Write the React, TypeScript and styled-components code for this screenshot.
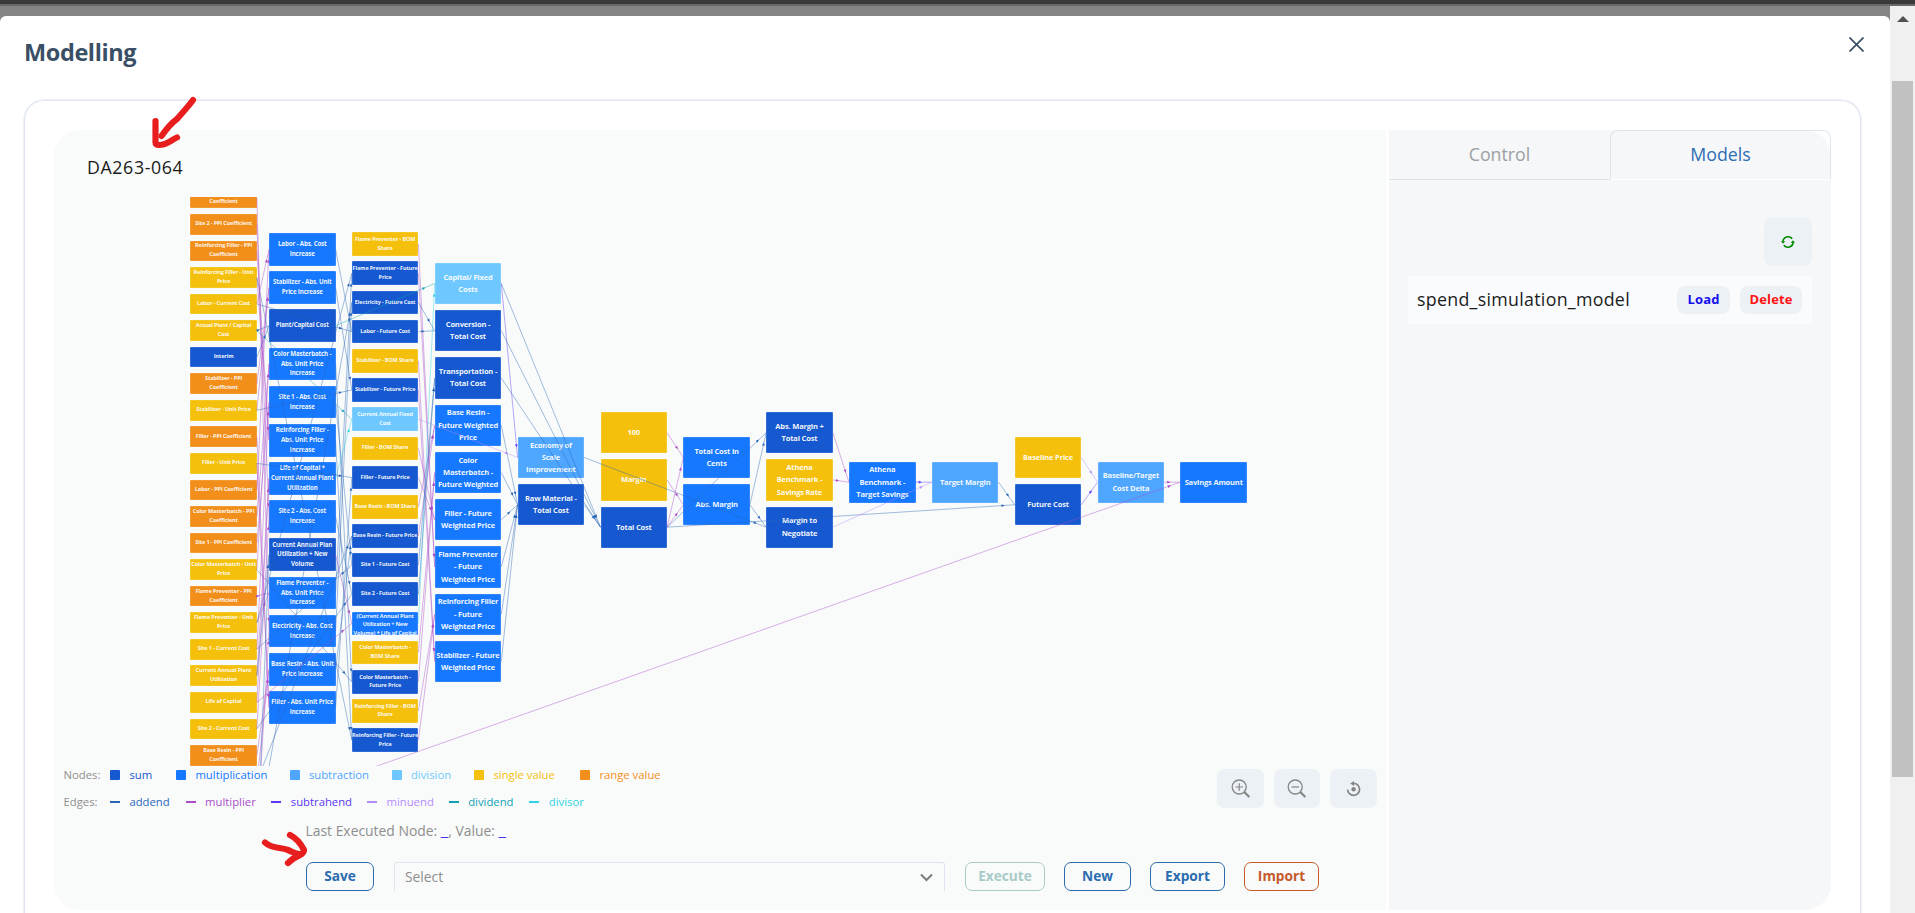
import React from "react";
import styled, { createGlobalStyle } from "styled-components";

const GlobalStyle = createGlobalStyle`
  * { box-sizing: border-box; }
  html, body { margin: 0; padding: 0; overflow: hidden; background: #fff; }
  body { font-family: "Open Sans", "Noto Sans", sans-serif; }
  button { font-family: inherit; padding: 0; margin: 0; }
`;

/* ---------- Page shell ---------- */

const Page = styled.div`
  position: relative;
  width: 1915px;
  height: 913px;
  display: flex;
  flex-direction: column;
  overflow: hidden;
  background: #858585;
`;

const TopStrip = styled.div`
  flex: none;
  height: 6px;
  background: #3a3a3a;
  border-bottom: 2px solid #696969;
`;

const Body = styled.div`
  flex: 1;
  display: flex;
  min-height: 0;
`;

const Modal = styled.section`
  flex: 1;
  margin-top: 10px;
  background: #fff;
  border-radius: 6px 6px 0 0;
  display: flex;
  flex-direction: column;
  min-height: 0;
`;

const ModalHeader = styled.header`
  height: 84px;
  flex: none;
  display: flex;
  justify-content: space-between;
  padding: 19px 26px 0 24px;
`;

const Title = styled.h1`
  margin: 0;
  font-size: 23.5px;
  line-height: 34px;
  font-weight: 700;
  letter-spacing: -0.4px;
  color: #3a4f66;
`;

const CloseButton = styled.button`
  border: 0;
  background: none;
  width: 15px;
  height: 15px;
  margin-top: 2px;
  display: flex;
`;

const Card = styled.div`
  flex: 1;
  margin: 0 29px 0 24px;
  padding: 29px 29px 2px 29px;
  border: 1px solid #dde4ed;
  border-bottom: 0;
  border-radius: 20px 20px 0 0;
  box-shadow: 0 0 0 1px #f0f2f8;
  display: flex;
  min-height: 0;
`;

const Workspace = styled.div`
  width: 1777px;
  height: 780px;
  display: flex;
  gap: 3px;
`;

/* ---------- Scrollbar ---------- */

const Scrollbar = styled.div`
  width: 25px;
  background: #f0f0f0;
  padding: 10px 2px 0;
  display: flex;
  flex-direction: column;
  align-items: center;
`;

const ScrollUp = styled.div`
  border: 6px solid transparent;
  border-top: 0;
  border-bottom: 6px solid #505050;
`;

const Thumb = styled.div`
  width: 21px;
  height: 696px;
  margin-top: 59px;
  background: #c1c1c1;
`;

/* ---------- Left pane ---------- */

const Canvas = styled.div`
  width: 1332px;
  background: #f9fbfa;
  border-radius: 26px 0 0 26px;
  display: flex;
  flex-direction: column;
`;

const ModelName = styled.div`
  height: 67px;
  padding: 24px 0 0 33px;
  font-size: 17.8px;
  line-height: 26px;
  letter-spacing: 0.6px;
  color: #1b1b1b;
`;

const Diagram = styled.div`
  position: relative;
  height: 569px;
  overflow: hidden;
`;

const NodeBox = styled.div<{ $x: number; $y: number; $h: number; $bg: string; $fs: number; $lh: number; $top?: boolean }>`
  position: absolute;
  left: ${(p) => p.$x}px;
  top: ${(p) => p.$y}px;
  width: 66.6px;
  height: ${(p) => p.$h}px;
  background: ${(p) => p.$bg};
  border-radius: 1px;
  box-shadow: inset 0 0 0 0.6px rgba(255, 255, 255, 0.22);
  display: flex;
  flex-direction: column;
  align-items: center;
  justify-content: ${(p) => (p.$top ? "flex-start" : "center")};
  overflow: hidden;
  padding-bottom: 1px;
  font-size: ${(p) => p.$fs}px;
  line-height: ${(p) => p.$lh}px;
  letter-spacing: -0.025em;
  font-weight: 700;
  color: rgba(255, 255, 255, 0.95);
  white-space: nowrap;
`;

const NodeLine = styled.span`
  flex: none;
`;

const EdgeLayer = styled.svg`
  position: absolute;
  inset: 0;
`;

const Footer = styled.div`
  display: flex;
  justify-content: space-between;
  padding: 0 9px 0 9.5px;
  height: 53px;
`;

const Legends = styled.div`
  display: flex;
  flex-direction: column;
`;

const Legend = styled.div<{ $gap: number }>`
  display: flex;
  align-items: center;
  height: 18px;
  margin-bottom: 9px;
  gap: ${(p) => p.$gap}px;
  font-size: 11.3px;
  line-height: 18px;
`;

const LegendLabel = styled.span<{ $gap: number }>`
  width: 46.5px;
  margin-right: -${(p) => p.$gap}px;
  color: #8e8e8e;
`;

const LegendItem = styled.span<{ $color: string; $w: number }>`
  width: ${(p) => p.$w}px;
  display: flex;
  align-items: center;
  gap: 9.4px;
  color: ${(p) => p.$color};
  white-space: nowrap;
`;

const Swatch = styled.i<{ $color: string; $line?: boolean }>`
  flex: none;
  width: 10px;
  height: ${(p) => (p.$line ? 2 : 10)}px;
  border-radius: ${(p) => (p.$line ? 0 : 1)}px;
  background: ${(p) => p.$color};
`;

const ZoomTools = styled.div`
  display: flex;
  gap: 10px;
  padding-top: 3px;
`;

const IconButton = styled.button<{ $w: number; $h: number }>`
  width: ${(p) => p.$w}px;
  height: ${(p) => p.$h}px;
  border: 0;
  border-radius: 8px;
  background: #ecf1f6;
  display: flex;
  align-items: center;
  justify-content: center;
`;

const Status = styled.div`
  padding-left: 251.5px;
  height: 43px;
  font-size: 13.9px;
  line-height: 24px;
  color: #8e8e8e;
  white-space: pre;
`;

const StatusValue = styled.span`
  font-size: 17px;
  line-height: 0;
  color: #3b36f0;
`;

const Actions = styled.div`
  display: flex;
  align-items: flex-start;
  padding-left: 252px;
`;

const ActionButton = styled.button<{ $w: number; $color: string; $ml?: number }>`
  width: ${(p) => p.$w}px;
  height: 29px;
  margin-left: ${(p) => p.$ml ?? 0}px;
  border: 1px solid ${(p) => p.$color};
  border-radius: 7px;
  background: transparent;
  color: ${(p) => p.$color};
  font-size: 13.7px;
  line-height: 24px;
  padding-bottom: 2px;
  font-weight: 700;
`;

const SelectBox = styled.div`
  width: 551px;
  height: 29px;
  margin-left: 20px;
  padding: 0 11px 0 10px;
  border: 1px solid #e0e4ee;
  border-bottom: 0;
  border-radius: 3px 3px 0 0;
  display: flex;
  align-items: center;
  justify-content: space-between;
  font-size: 13.8px;
  line-height: 24px;
  color: #8e8e8e;
`;

/* ---------- Right pane ---------- */

const SidePane = styled.aside`
  width: 442px;
  position: relative;
  display: flex;
  flex-direction: column;
  background: #f5f7f9;
  border-radius: 0 26px 26px 0;
`;

const Tabs = styled.div`
  display: flex;
  height: 50px;
`;

const Tab = styled.div<{ $active?: boolean }>`
  flex: 1;
  display: flex;
  align-items: center;
  justify-content: center;
  padding-bottom: 3px;
  font-size: 17.8px;
  line-height: 26px;
  color: ${(p) => (p.$active ? "#2f6db3" : "#9c9fa2")};
  border: 1px solid ${(p) => (p.$active ? "#dde6ef" : "transparent")};
  border-bottom-color: ${(p) => (p.$active ? "#fff" : "#dde4ed")};
  border-radius: ${(p) => (p.$active ? "8px 8px 0 0" : "0")};
`;

const SideBody = styled.div`
  padding: 38px 19px 0;
  display: flex;
  flex-direction: column;
  align-items: flex-end;
  gap: 10px;
`;

const ModelRow = styled.div`
  width: 404px;
  height: 48px;
  background: #fafbfd;
  display: flex;
  align-items: center;
  padding: 0 10px 0 9px;
`;

const ModelTitle = styled.span`
  flex: 1;
  font-size: 17.8px;
  line-height: 26px;
  letter-spacing: 0.3px;
  padding-bottom: 3px;
  color: #1b1b1b;
`;

const RowButton = styled.button<{ $w: number; $color: string }>`
  width: ${(p) => p.$w}px;
  height: 28px;
  margin-left: 10px;
  border: 0;
  border-radius: 8px;
  background: #ecf1f6;
  color: ${(p) => p.$color};
  font-size: 13px;
  line-height: 24px;
  letter-spacing: 0.15px;
  font-weight: 700;
  padding-bottom: 2px;
`;

const Scribble = styled.svg`
  position: absolute;
  left: 0;
  top: 0;
  pointer-events: none;
`;

/* ---------- Diagram data ---------- */

const KIND = {
  sum: "#1558d0",
  mul: "#1677ff",
  sub: "#4ea6ff",
  div: "#6ec8ff",
  one: "#f4c00c",
  range: "#f28e1a",
};
type Kind = keyof typeof KIND;

const EDGE = {
  addend: "#2a66b8",
  multiplier: "#a94cc8",
  subtrahend: "#5b36f5",
  minuend: "#b48bfa",
  dividend: "#12a0b4",
  divisor: "#2fd3e6",
};
type EdgeKind = keyof typeof EDGE;

type Column = { x: number; y: number; pitch: number; h: number; fs: number; lh: number; nodes: [string, Kind, string][] };

const W = 66.6;
const OX = 54;
const OY = 197;

const big = (x: number, y: number, nodes: [string, Kind, string][]): Column => ({
  x, y, pitch: 47.25, h: 41.4, fs: 7.55, lh: 12.3, nodes,
});

const columns: Column[] = [
  {
    x: 190.3, y: 187.5, pitch: 26.55, h: 20.7, fs: 5.55, lh: 9,
    nodes: [
      ["elP", "range", "Electricity - PPI|Coefficient"],
      ["s2P", "range", "Site 2 - PPI Coefficient"],
      ["rfP", "range", "Reinforcing Filler - PPI|Coefficient"],
      ["rfU", "one", "Reinforcing Filler - Unit|Price"],
      ["laU", "one", "Labor - Current Cost"],
      ["act", "one", "Actual Plant / Capital|Cost"],
      ["int", "sum", "Interim"],
      ["stP", "range", "Stabilizer - PPI|Coefficient"],
      ["stU", "one", "Stabilizer - Unit Price"],
      ["fiP", "range", "Filler - PPI Coefficient"],
      ["fiU", "one", "Filler - Unit Price"],
      ["laP", "range", "Labor - PPI Coefficient"],
      ["cmP", "range", "Color Masterbatch - PPI|Coefficient"],
      ["s1P", "range", "Site 1 - PPI Coefficient"],
      ["cmU", "one", "Color Masterbatch - Unit|Price"],
      ["fpP", "range", "Flame Preventer - PPI|Coefficient"],
      ["fpU", "one", "Flame Preventer - Unit|Price"],
      ["s1U", "one", "Site 1 - Current Cost"],
      ["cap", "one", "Current Annual Plant|Utilization"],
      ["life", "one", "Life of Capital"],
      ["s2U", "one", "Site 2 - Current Cost"],
      ["brP", "range", "Base Resin - PPI|Coefficient"],
      ["brU", "one", ""],
      ["vol", "one", ""],
      ["elU", "one", ""],
      ["newV", "one", ""],
    ],
  },
  {
    x: 269, y: 233, pitch: 38.17, h: 32.8, fs: 6.2, lh: 9.7,
    nodes: [
      ["laA", "mul", "Labor - Abs. Cost|Increase"],
      ["stA", "mul", "Stabilizer - Abs. Unit|Price Increase"],
      ["plant", "sum", "Plant/Capital Cost"],
      ["cmA", "mul", "Color Masterbatch -|Abs. Unit Price|Increase"],
      ["s1A", "mul", "Site 1 - Abs. Cost|Increase"],
      ["rfA", "mul", "Reinforcing Filler -|Abs. Unit Price|Increase"],
      ["lifeCap", "mul", "Life of Capital *|Current Annual Plant|Utilization"],
      ["s2A", "mul", "Site 2 - Abs. Cost|Increase"],
      ["planVol", "sum", "Current Annual Plan|Utilization + New|Volume"],
      ["fpA", "mul", "Flame Preventer -|Abs. Unit Price|Increase"],
      ["elA", "mul", "Electricity - Abs. Cost|Increase"],
      ["brA", "mul", "Base Resin - Abs. Unit|Price Increase"],
      ["fiA", "mul", "Filler - Abs. Unit Price|Increase"],
    ],
  },
  {
    x: 351.8, y: 232.3, pitch: 29.18, h: 23.6, fs: 5.5, lh: 8.8,
    nodes: [
      ["fpB", "one", "Flame Preventer - BOM|Share"],
      ["fpF", "sum", "Flame Preventer - Future|Price"],
      ["elF", "sum", "Electricity - Future Cost"],
      ["laF", "sum", "Labor - Future Cost"],
      ["stB", "one", "Stabilizer - BOM Share"],
      ["stF", "sum", "Stabilizer - Future Price"],
      ["fixed", "div", "Current Annual Fixed|Cost"],
      ["fiB", "one", "Filler - BOM Share"],
      ["fiF", "sum", "Filler - Future Price"],
      ["brB", "one", "Base Resin - BOM Share"],
      ["brF", "sum", "Base Resin - Future Price"],
      ["s1F", "sum", "Site 1 - Future Cost"],
      ["s2F", "sum", "Site 2 - Future Cost"],
      ["volLife", "mul", "(Current Annual Plant|Utilization + New|Volume) * Life of Capital"],
      ["cmB", "one", "Color Masterbatch -|BOM Share"],
      ["cmF", "sum", "Color Masterbatch -|Future Price"],
      ["rfB", "one", "Reinforcing Filler - BOM|Share"],
      ["rfF", "sum", "Reinforcing Filler - Future|Price"],
    ],
  },
  big(434.7, 262.8, [
    ["capF", "div", "Capital/ Fixed|Costs"],
    ["conv", "sum", "Conversion -|Total Cost"],
    ["trans", "sum", "Transportation -|Total Cost"],
    ["brW", "mul", "Base Resin -|Future Weighted|Price"],
    ["cmW", "mul", "Color|Masterbatch -|Future Weighted"],
    ["fiW", "mul", "Filler - Future|Weighted Price"],
    ["fpW", "mul", "Flame Preventer|- Future|Weighted Price"],
    ["rfW", "mul", "Reinforcing Filler|- Future|Weighted Price"],
    ["stW", "mul", "Stabilizer - Future|Weighted Price"],
  ]),
  big(517.6, 436.8, [
    ["eco", "sub", "Economy of|Scale|Improvement"],
    ["raw", "sum", "Raw Material -|Total Cost"],
  ]),
  big(600.5, 412, [
    ["hund", "one", "100"],
    ["margin", "one", "Margin"],
    ["total", "sum", "Total Cost"],
  ]),
  big(683.3, 436.8, [
    ["cents", "mul", "Total Cost in|Cents"],
    ["abs", "mul", "Abs. Margin"],
  ]),
  big(766.2, 412, [
    ["absT", "sum", "Abs. Margin +|Total Cost"],
    ["rate", "one", "Athena|Benchmark -|Savings Rate"],
    ["neg", "sum", "Margin to|Negotiate"],
  ]),
  big(849, 461.5, [["tSav", "mul", "Athena|Benchmark -|Target Savings"]]),
  big(931.9, 461.5, [["tMar", "sub", "Target Margin"]]),
  big(1014.7, 436.8, [
    ["base", "one", "Baseline Price"],
    ["fut", "sum", "Future Cost"],
  ]),
  big(1097.6, 461.5, [["delta", "sub", "Baseline/Target|Cost Delta"]]),
  big(1180.4, 461.5, [["save", "mul", "Savings Amount"]]),
];

const place: Record<string, { x: number; y: number }> = {};
columns.forEach((c) =>
  c.nodes.forEach(([id], i) => {
    place[id] = { x: c.x - OX, y: c.y + i * c.pitch + c.h / 2 - OY };
  })
);

const edges: [string, string, EdgeKind][] = [];
["la", "st", "cm", "s1", "rf", "s2", "fp", "el", "br", "fi"].forEach((k) => {
  edges.push([`${k}P`, `${k}A`, "multiplier"], [`${k}U`, `${k}A`, "multiplier"]);
  edges.push([`${k}A`, `${k}F`, "addend"], [`${k}U`, `${k}F`, "addend"]);
});
["br", "cm", "fi", "fp", "rf", "st"].forEach((k) => {
  edges.push([`${k}B`, `${k}W`, "multiplier"], [`${k}F`, `${k}W`, "multiplier"]);
  edges.push([`${k}W`, "raw", "addend"]);
});
edges.push(
  ["act", "plant", "addend"], ["int", "plant", "addend"],
  ["act", "fixed", "dividend"], ["lifeCap", "fixed", "divisor"],
  ["plant", "capF", "dividend"], ["volLife", "capF", "divisor"],
  ["life", "lifeCap", "multiplier"], ["cap", "lifeCap", "multiplier"],
  ["cap", "planVol", "addend"], ["newV", "planVol", "addend"],
  ["life", "volLife", "multiplier"], ["planVol", "volLife", "multiplier"],
  ["elF", "conv", "addend"], ["laF", "conv", "addend"],
  ["s1F", "trans", "addend"], ["s2F", "trans", "addend"],
  ["fixed", "eco", "minuend"], ["capF", "eco", "subtrahend"],
  ["capF", "total", "addend"], ["conv", "total", "addend"], ["trans", "total", "addend"], ["raw", "total", "addend"],
  ["eco", "neg", "addend"],
  ["hund", "cents", "multiplier"], ["total", "cents", "multiplier"],
  ["margin", "abs", "multiplier"], ["total", "abs", "multiplier"],
  ["total", "absT", "addend"], ["total", "fut", "addend"],
  ["abs", "absT", "addend"], ["abs", "neg", "addend"],
  ["absT", "tSav", "multiplier"], ["rate", "tSav", "multiplier"],
  ["tSav", "tMar", "subtrahend"], ["neg", "tMar", "minuend"],
  ["tMar", "fut", "addend"], ["base", "delta", "minuend"], ["fut", "delta", "subtrahend"],
  ["delta", "save", "multiplier"], ["vol", "save", "multiplier"]
);

const Edge = ({ from, to, kind }: { from: string; to: string; kind: EdgeKind }) => {
  const x1 = place[from].x + W;
  const y1 = place[from].y;
  const x2 = place[to].x;
  const y2 = place[to].y;
  const len = Math.hypot(x2 - x1, y2 - y1);
  const ux = (x2 - x1) / len;
  const uy = (y2 - y1) / len;
  const angle = (Math.atan2(uy, ux) * 180) / Math.PI;
  return (
    <g>
      <line x1={x1} y1={y1} x2={x2} y2={y2} stroke={EDGE[kind]} strokeWidth="0.9" opacity="0.48" />
      <path
        d="M0 0L-3.2 -1.4V1.4Z"
        fill={EDGE[kind]}
        transform={`translate(${x2 - ux * 10} ${y2 - uy * 10}) rotate(${angle})`}
      />
    </g>
  );
};

const nodeLegend: [string, Kind, number][] = [
  ["sum", "sum", 42], ["multiplication", "mul", 89.5], ["subtraction", "sub", 78],
  ["division", "div", 58.5], ["single value", "one", 82], ["range value", "range", 82],
];
const edgeLegend: [EdgeKind, number][] = [
  ["addend", 60], ["multiplier", 70], ["subtrahend", 80], ["minuend", 66], ["dividend", 65], ["divisor", 56],
];

export default function App() {
  return (
    <Page>
      <GlobalStyle />
      <TopStrip />
      <Body>
        <Modal>
          <ModalHeader>
            <Title>Modelling</Title>
            <CloseButton aria-label="Close">
              <svg width="15" height="15" viewBox="0 0 15 15">
                <path d="M0.5 0.5L14.5 14.5M14.5 0.5L0.5 14.5" stroke="#3a4f66" strokeWidth="1.7" />
              </svg>
            </CloseButton>
          </ModalHeader>
          <Card>
            <Workspace>
              <Canvas>
                <ModelName>DA263-064</ModelName>
                <Diagram>
                  {columns.map((c) =>
                    c.nodes.map(([id, kind, label], i) => (
                      <NodeBox
                        key={id}
                        $x={c.x - OX}
                        $y={c.y + i * c.pitch - OY}
                        $h={c.h}
                        $bg={KIND[kind]}
                        $fs={c.fs}
                        $lh={c.lh}
                        $top={id === "volLife"}
                      >
                        {label.split("|").map((t) => (
                          <NodeLine key={t}>{t}</NodeLine>
                        ))}
                      </NodeBox>
                    ))
                  )}
                  <EdgeLayer width="1332" height="569">
                    {edges.map(([a, b, k]) => (
                      <Edge key={a + b} from={a} to={b} kind={k} />
                    ))}
                  </EdgeLayer>
                </Diagram>
                <Footer>
                  <Legends>
                    <Legend $gap={24}>
                      <LegendLabel $gap={24}>Nodes:</LegendLabel>
                      {nodeLegend.map(([t, k, w]) => (
                        <LegendItem key={t} $color={KIND[k]} $w={w}>
                          <Swatch $color={KIND[k]} />
                          {t}
                        </LegendItem>
                      ))}
                    </Legend>
                    <Legend $gap={15.7}>
                      <LegendLabel $gap={15.7}>Edges:</LegendLabel>
                      {edgeLegend.map(([t, w]) => (
                        <LegendItem key={t} $color={EDGE[t]} $w={w}>
                          <Swatch $color={EDGE[t]} $line />
                          {t}
                        </LegendItem>
                      ))}
                    </Legend>
                  </Legends>
                  <ZoomTools>
                    <IconButton $w={47} $h={39} aria-label="Zoom in">
                      <svg width="20" height="20" viewBox="0 0 20 20" fill="none" stroke="#858585">
                        <circle cx="8.2" cy="8" r="7" strokeWidth="1.3" />
                        <path d="M4.5 8H12M8.2 4.3V11.7" strokeWidth="1.2" />
                        <path d="M13.2 13L18.3 18" strokeWidth="2.2" />
                      </svg>
                    </IconButton>
                    <IconButton $w={46} $h={39} aria-label="Zoom out">
                      <svg width="20" height="20" viewBox="0 0 20 20" fill="none" stroke="#858585">
                        <circle cx="8.2" cy="8" r="7" strokeWidth="1.3" />
                        <path d="M4.5 8H12" strokeWidth="1.2" />
                        <path d="M13.2 13L18.3 18" strokeWidth="2.2" />
                      </svg>
                    </IconButton>
                    <IconButton $w={47} $h={39} aria-label="Reset view">
                      <svg width="16" height="16" viewBox="0 0.7 16 16" fill="none" stroke="#858585">
                        <path d="M7.2 3.1A6 6 0 1 1 1.6 9.2" strokeWidth="1.7" />
                        <path d="M8 0.8L4.2 3.1L8 5.8Z" fill="#858585" stroke="none" />
                        <circle cx="7.6" cy="9" r="2.2" fill="#858585" stroke="none" />
                      </svg>
                    </IconButton>
                  </ZoomTools>
                </Footer>
                <Status>
                  Last Executed Node: <StatusValue>_</StatusValue>, Value: <StatusValue>_</StatusValue>
                </Status>
                <Actions>
                  <ActionButton $w={68} $color="#2b6cb0">Save</ActionButton>
                  <SelectBox>
                    Select
                    <svg width="13" height="9" viewBox="0 0 13 9" fill="none">
                      <path d="M1 1.5L6.5 7L12 1.5" stroke="#7c7c7c" strokeWidth="2" />
                    </svg>
                  </SelectBox>
                  <ActionButton $w={80} $ml={20} $color="#a9cac8">Execute</ActionButton>
                  <ActionButton $w={67} $ml={19} $color="#2b6cb0">New</ActionButton>
                  <ActionButton $w={75} $ml={19} $color="#2b6cb0">Export</ActionButton>
                  <ActionButton $w={75} $ml={19} $color="#c55a2b">Import</ActionButton>
                </Actions>
              </Canvas>
              <SidePane>
                <Tabs>
                  <Tab>Control</Tab>
                  <Tab $active>Models</Tab>
                </Tabs>
                <SideBody>
                  <IconButton $w={48} $h={48} aria-label="Refresh">
                    <svg width="14" height="14" viewBox="0 0 14 14" fill="none" stroke="#008a00" strokeWidth="1.6">
                      <path d="M1.9 6.6A5.2 5.2 0 0 1 11.2 3.8M12.1 7.4A5.2 5.2 0 0 1 2.8 10.2" />
                      <path d="M0 6.2H4.2L2 8.8ZM9.8 7.8H14L12 5.2Z" fill="#008a00" stroke="none" />
                    </svg>
                  </IconButton>
                  <ModelRow>
                    <ModelTitle>spend_simulation_model</ModelTitle>
                    <RowButton $w={53} $color="#1410ee">Load</RowButton>
                    <RowButton $w={62} $color="#ff1414">Delete</RowButton>
                  </ModelRow>
                </SideBody>
              </SidePane>
            </Workspace>
          </Card>
        </Modal>
        <Scrollbar>
          <ScrollUp />
          <Thumb />
        </Scrollbar>
      </Body>
      <Scribble width="400" height="913" fill="none" stroke="#e81e1e" strokeWidth="6.2" strokeLinecap="round" strokeLinejoin="round">
        <path d="M193 100C188 107 182 113 177 119C170 124 165 131 161.500 136" />
        <path d="M155.500 121V142Q155.500 145 159 145C167 145 171 140 177 137.500" />
        <path d="M265 842.500C272 849 280 847 288 850C293 852 297 855 301 854" />
        <path d="M290 835C296 838 301 844 304 850Q304 853 300 855C295 857 291 860 288 863" />
      </Scribble>
    </Page>
  );
}
